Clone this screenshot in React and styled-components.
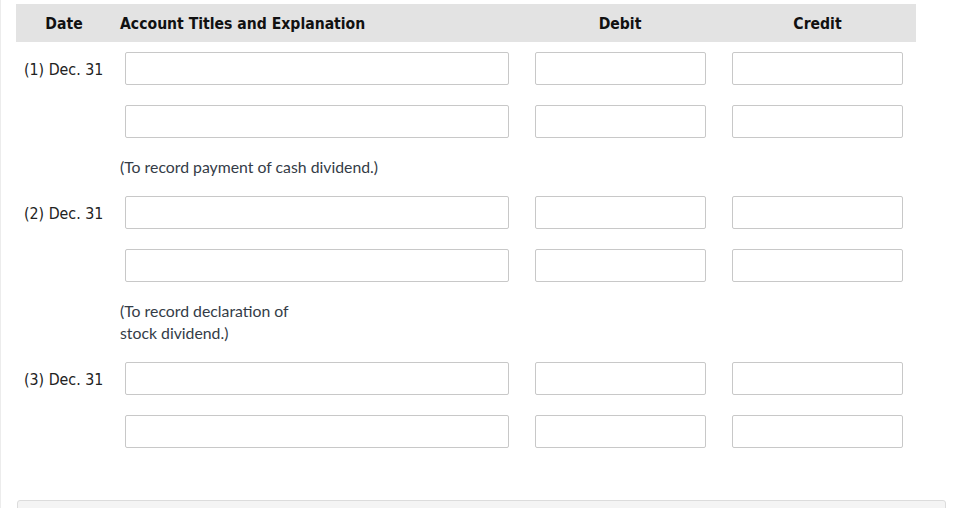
import styled, {createGlobalStyle} from "styled-components";

const GlobalStyle = createGlobalStyle`
  html, body {
    margin: 0;
    padding: 0;
    background: #fff;
  }
  * {
    box-sizing: border-box;
  }
`;

const entries = [
    {
        date: "(1) Dec. 31",
        note: ["(To record payment of cash dividend.)"]
    },
    {
        date: "(2) Dec. 31",
        note: ["(To record declaration of", "stock dividend.)"]
    },
    {
        date: "(3) Dec. 31",
        note: null
    }
];

const Page = styled.div`
  width: 961px;
  height: 508px;
  overflow: hidden;
  border-left: 1px solid #ececec;
  padding: 4px 0 0 15px;
`;

const Table = styled.div`
  width: 900px;
  display: grid;
  grid-template-columns: 96px 408px 200px 195px 1px;
`;

const HeaderCell = styled.div`
  height: 38px;
  background-color: #e3e3e3;
  display: flex;
  align-items: center;
  justify-content: ${props => props.left ? "flex-start" : "center"};
  padding-left: ${props => props.left ? "8px" : "0"};
  padding-top: 2px;
  font-family: "DejaVu Sans Condensed", "DejaVu Sans", sans-serif;
  font-weight: bold;
  font-size: 15.6px;
  color: #111;
  margin-bottom: 10px;
`;

const DateCell = styled.div`
  height: 33px;
  display: flex;
  align-items: center;
  padding-left: 8px;
  padding-top: 2px;
  font-family: "DejaVu Sans Condensed", "DejaVu Sans", sans-serif;
  font-size: 15.8px;
  color: #222;
  margin-top: ${props => props.gap}px;
`;

const InputCell = styled.div`
  height: 33px;
  display: flex;
  justify-content: ${props => props.wide ? "flex-start" : "center"};
  padding-left: ${props => props.wide ? "13px" : "0"};
  margin-top: ${props => props.gap}px;
`;

const TextBox = styled.input`
  width: ${props => props.wide ? "384px" : "171px"};
  height: 33px;
  border: 1px solid #c8c8c8;
  border-radius: 2px;
  background: #fff;
  padding: 0 6px;
  outline: none;
`;

const Note = styled.div`
  grid-column: 2 / span 4;
  padding: 18px 0 18px 8px;
  font-family: Lato, "Open Sans", sans-serif;
  font-size: 15.8px;
  line-height: 22px;
  color: #343c47;
`;

const Spacer = styled.div``;

const Footer = styled.div`
  margin: 52px 0 0 1px;
  width: 929px;
  height: 40px;
  background: #f4f4f4;
  border: 1px solid #dcdcdc;
  border-radius: 3px;
`;

function EntryRow({date, gap}) {
    return (
        <>
            <DateCell gap={gap}>{date}</DateCell>
            <InputCell wide gap={gap}><TextBox wide /></InputCell>
            <InputCell gap={gap}><TextBox /></InputCell>
            <InputCell gap={gap}><TextBox /></InputCell>
            <Spacer />
        </>
    );
}

function App() {
    return (
        <Page>
            <GlobalStyle />
            <Table>
                <HeaderCell>Date</HeaderCell>
                <HeaderCell left>Account Titles and Explanation</HeaderCell>
                <HeaderCell>Debit</HeaderCell>
                <HeaderCell>Credit</HeaderCell>
                <HeaderCell />

                {entries.map((entry, i) => (
                    <>
                        <EntryRow key={"a" + i} date={entry.date} gap={0} />
                        <EntryRow key={"b" + i} date="" gap={20} />
                        {entry.note
                            ? <>
                                <Spacer />
                                <Note>
                                    {entry.note.map((line, j) => <div key={j}>{line}</div>)}
                                </Note>
                              </>
                            : ""
                        }
                    </>
                ))}
            </Table>
            <Footer />
        </Page>
    );
}

export default App;
